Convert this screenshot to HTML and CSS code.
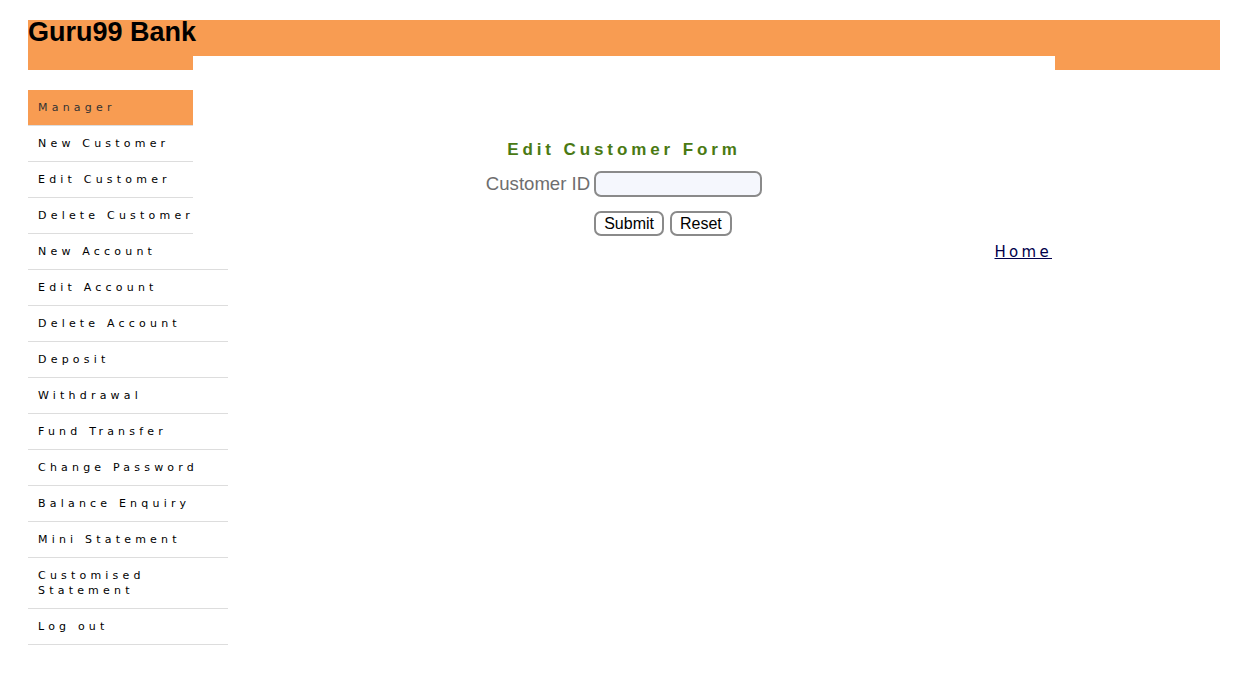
FILE: index.html
```html
<!DOCTYPE html>
<html>
<head>
<meta charset="utf-8">
<title>Guru99 Bank Edit Customer</title>
<link rel="stylesheet" href="styles.css">
</head>
<body>
<div class="page">
  <header class="header">
    <div class="header-top"><h1 class="brand">Guru99 Bank</h1></div>
    <div class="header-bottom">
      <div class="hb-side"></div>
      <div class="hb-mid"></div>
      <div class="hb-side"></div>
    </div>
  </header>
  <div class="body">
    <nav class="menu">
      <div class="item active">Manager</div>
      <a class="item" href="#">New Customer</a>
      <a class="item" href="#">Edit Customer</a>
      <a class="item" href="#">Delete Customer</a>
      <a class="item wide" href="#">New Account</a>
      <a class="item wide" href="#">Edit Account</a>
      <a class="item wide" href="#">Delete Account</a>
      <a class="item wide" href="#">Deposit</a>
      <a class="item wide" href="#">Withdrawal</a>
      <a class="item wide" href="#">Fund Transfer</a>
      <a class="item wide" href="#">Change Password</a>
      <a class="item wide" href="#">Balance Enquiry</a>
      <a class="item wide" href="#">Mini Statement</a>
      <a class="item wide" href="#">Customised Statement</a>
      <a class="item wide" href="#">Log out</a>
    </nav>
    <main class="content">
      <p class="heading">Edit Customer Form</p>
      <form class="form">
        <label class="label" for="cid">Customer ID</label>
        <input class="field" id="cid" type="text">
        <div class="buttons">
          <button class="btn" type="button">Submit</button>
          <button class="btn" type="reset">Reset</button>
        </div>
      </form>
      <div class="home-row"><a class="home" href="#">Home</a></div>
    </main>
  </div>
</div>
</body>
</html>
```

FILE: styles.css
```css
html, body {
  margin: 0;
  padding: 0;
  background: #ffffff;
}

.page {
  padding: 20px 28px;
}

.header-top {
  height: 36px;
  background: #f89c52;
}

.brand {
  margin: 0;
  font-family: "Liberation Sans", Arial, sans-serif;
  font-size: 27px;
  font-weight: bold;
  line-height: 24px;
  color: #000;
  white-space: nowrap;
}

.header-bottom {
  display: flex;
  height: 14px;
}

.hb-side {
  width: 165px;
  background: #f89c52;
}

.hb-mid {
  flex: 1;
  background: #fff;
}

.body {
  display: flex;
  margin-top: 20px;
}

.menu {
  width: 165px;
  display: flex;
  flex-direction: column;
  flex-shrink: 0;
}

.item {
  display: block;
  box-sizing: border-box;
  width: 165px;
  padding: 10px 10px;
  font-family: "DejaVu Sans", Verdana, sans-serif;
  font-size: 11px;
  line-height: 15px;
  letter-spacing: 4.2px;
  color: #000;
  text-decoration: none;
  white-space: nowrap;
  border-bottom: 1px solid #dddddd;
}

.item.wide {
  width: 200px;
  white-space: normal;
}

.item.active {
  background: #f89c52;
  color: #333;
}

.content {
  width: 862px;
  flex-shrink: 0;
}

.heading {
  margin: 50px 0 0;
  text-align: center;
  font-family: "Liberation Sans", Arial, sans-serif;
  font-size: 17px;
  font-weight: bold;
  letter-spacing: 3.9px;
  line-height: 20px;
  color: #4a7a13;
}

.form {
  display: grid;
  grid-template-columns: auto auto;
  justify-content: center;
  align-items: center;
  column-gap: 4px;
  row-gap: 14px;
  margin-top: 11px;
}

.label {
  text-align: right;
  font-family: "Liberation Sans", Arial, sans-serif;
  font-size: 18.6px;
  color: #6e6e6e;
}

.field {
  box-sizing: border-box;
  width: 168px;
  height: 26px;
  margin: 0;
  border: 2px solid #8a8a8a;
  border-radius: 7px;
  background: #f5f7fd;
  font-size: 15px;
}

.buttons {
  grid-column: 2;
  display: flex;
  gap: 6px;
}

.btn {
  box-sizing: border-box;
  height: 25px;
  padding: 0 8px;
  border: 2px solid #8a8a8a;
  border-radius: 7px;
  background: #ffffff;
  font-family: "Liberation Sans", Arial, sans-serif;
  font-size: 16px;
  color: #000;
}

.home-row {
  display: flex;
  justify-content: flex-end;
  padding-right: 3px;
  margin-top: 7px;
}

.home {
  font-family: "DejaVu Sans", Verdana, sans-serif;
  font-size: 15px;
  letter-spacing: 3.3px;
  color: #00004a;
  text-decoration: underline;
}
```
